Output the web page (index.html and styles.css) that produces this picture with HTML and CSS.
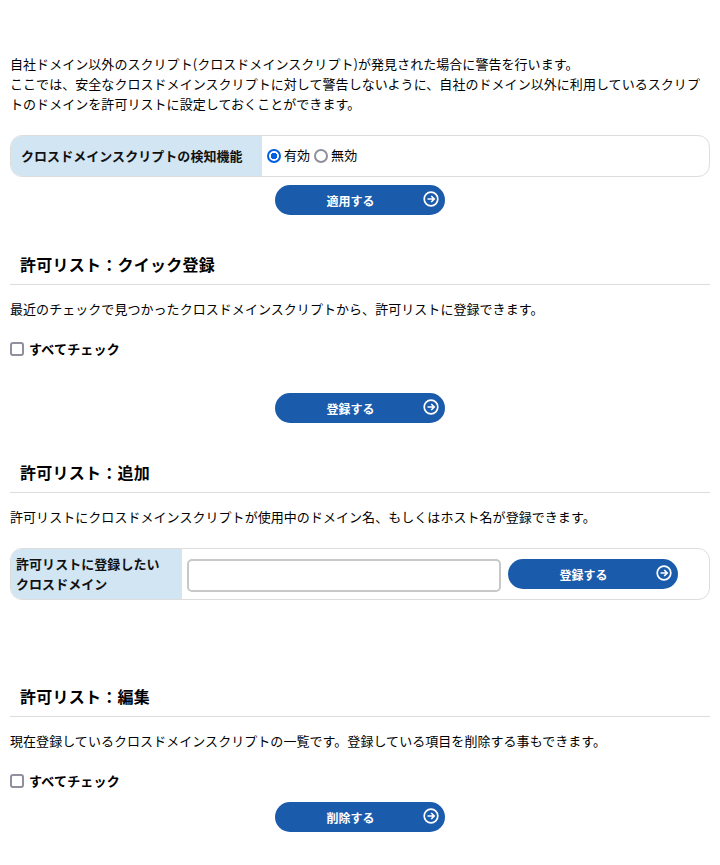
FILE: index.html
```html
<!DOCTYPE html>
<html lang="ja">
<head>
    <meta charset="UTF-8" />
    <title>クロスドメインスクリプト</title>
    <link rel="stylesheet" href="styles.css">
</head>
<body>

    <svg class="icon-defs" width="0" height="0">
        <symbol id="arrowIcon" viewBox="0 0 16 16">
            <circle cx="8" cy="8" r="6.8" fill="none" stroke="#fff" stroke-width="1.7" />
            <path d="M4.5 8H11M8.2 5l3 3-3 3" fill="none" stroke="#fff" stroke-width="1.7" />
        </symbol>
    </svg>

    <!-- Intro -->
    <p class="intro">
        自社ドメイン以外のスクリプト(クロスドメインスクリプト)が発見された場合に警告を行います。<br>
        ここでは、安全なクロスドメインスクリプトに対して警告しないように、自社のドメイン以外に利用しているスクリプトのドメインを許可リストに設定しておくことができます。
    </p>

    <div class="setting-table">
        <div class="setting-head detect-head">クロスドメインスクリプトの検知機能</div>
        <div class="setting-body detect-body">
            <label class="radio-label"><input type="radio" name="detect" checked />有効</label>
            <label class="radio-label"><input type="radio" name="detect" />無効</label>
        </div>
    </div>
    <div class="btn-row apply-row">
        <button class="action-btn">適用する<svg class="btn-icon"><use href="#arrowIcon" /></svg></button>
    </div>

    <!-- Quick -->
    <h2 class="section-title quick-title">許可リスト：クイック登録</h2>
    <p class="section-text">最近のチェックで見つかったクロスドメインスクリプトから、許可リストに登録できます。</p>
    <label class="check-all"><input type="checkbox" />すべてチェック</label>
    <div class="btn-row quick-row">
        <button class="action-btn">登録する<svg class="btn-icon"><use href="#arrowIcon" /></svg></button>
    </div>

    <!-- Add -->
    <h2 class="section-title add-title">許可リスト：追加</h2>
    <p class="section-text">許可リストにクロスドメインスクリプトが使用中のドメイン名、もしくはホスト名が登録できます。</p>
    <div class="setting-table add-table">
        <div class="setting-head add-head">許可リストに登録したい<br>クロスドメイン</div>
        <div class="setting-body add-body">
            <input type="text" class="domain-input" />
            <button class="action-btn">登録する<svg class="btn-icon"><use href="#arrowIcon" /></svg></button>
        </div>
    </div>

    <!-- Edit -->
    <h2 class="section-title edit-title">許可リスト：編集</h2>
    <p class="section-text">現在登録しているクロスドメインスクリプトの一覧です。登録している項目を削除する事もできます。</p>
    <label class="check-all"><input type="checkbox" />すべてチェック</label>
    <div class="btn-row edit-row">
        <button class="action-btn">削除する<svg class="btn-icon"><use href="#arrowIcon" /></svg></button>
    </div>

</body>
</html>
```

FILE: styles.css
```css
body {
    font-family: "Noto Sans CJK JP", "Liberation Sans", sans-serif;
    font-size: 13px;
    line-height: 20px;
    letter-spacing: 0.05px;
    color: #000;
    background-color: #fff;
    margin: 0;
    padding: 54px 10px 0;
    height: 865px;
    box-sizing: border-box;
    overflow: hidden;
}

.icon-defs {
    position: absolute;
}

p {
    margin: 0;
}

.setting-table {
    display: flex;
    margin-top: 21px;
    border: 1px solid #ddd;
    border-radius: 12px;
    overflow: hidden;
}

.setting-head {
    background-color: #d2e5f3;
    font-weight: bold;
    display: flex;
    align-items: center;
    box-sizing: border-box;
    color: #111;
}

.detect-head {
    width: 251px;
    height: 40px;
    padding: 0 0 1px 10px;
}

.setting-body {
    display: flex;
    align-items: center;
    flex: 1;
    padding-left: 5px;
}

.detect-body {
    padding-bottom: 2px;
}

.radio-label {
    display: flex;
    align-items: center;
    margin-right: 4px;
}

.radio-label input {
    appearance: none;
    width: 14px;
    height: 14px;
    margin: 2px 3px 0 0;
    border: 2px solid #8f8f9d;
    border-radius: 50%;
    box-sizing: border-box;
    background-color: #fff;
}

.radio-label input:checked {
    border-color: #0060df;
    background: radial-gradient(circle, #0060df 0 3px, #fff 3.5px);
}

.btn-row {
    display: flex;
    justify-content: center;
}

.apply-row {
    margin-top: 8px;
}

.action-btn {
    position: relative;
    width: 170px;
    height: 30px;
    padding: 0 19px 0 0;
    background-color: #1a5bab;
    color: white;
    border: none;
    border-radius: 15px;
    font-family: inherit;
    font-size: 12px;
    font-weight: bold;
    cursor: pointer;
    flex-shrink: 0;
}

.btn-icon {
    position: absolute;
    right: 6px;
    top: 6px;
    width: 16px;
    height: 16px;
}

.section-title {
    margin: 0;
    padding: 0 0 8px 10px;
    font-size: 16px;
    line-height: 24px;
    letter-spacing: 0.25px;
    border-bottom: 1px solid #ddd;
}

.quick-title {
    margin-top: 37px;
}

.add-title {
    margin-top: 37px;
}

.edit-title {
    margin-top: 84px;
}

.section-text {
    margin-top: 14px;
}

.check-all {
    display: flex;
    align-items: center;
    margin-top: 20px;
    font-weight: bold;
    letter-spacing: 0.2px;
}

.check-all input {
    appearance: none;
    width: 14px;
    height: 14px;
    margin: 0 5px 0 0;
    border: 2px solid #8f8f9d;
    border-radius: 3px;
    box-sizing: border-box;
    background-color: #fff;
}

.quick-row {
    margin-top: 34px;
}

.edit-row {
    margin-top: 11px;
}

.add-table {
    margin-top: 21px;
}

.add-head {
    width: 171px;
    height: 50px;
    padding-left: 5px;
}

.add-body {
    padding-left: 5px;
}

.domain-input {
    width: 314px;
    height: 33px;
    box-sizing: border-box;
    border: 2px solid #c8c8c8;
    border-radius: 5px;
    margin: 3px 7px 0 0;
}
```
